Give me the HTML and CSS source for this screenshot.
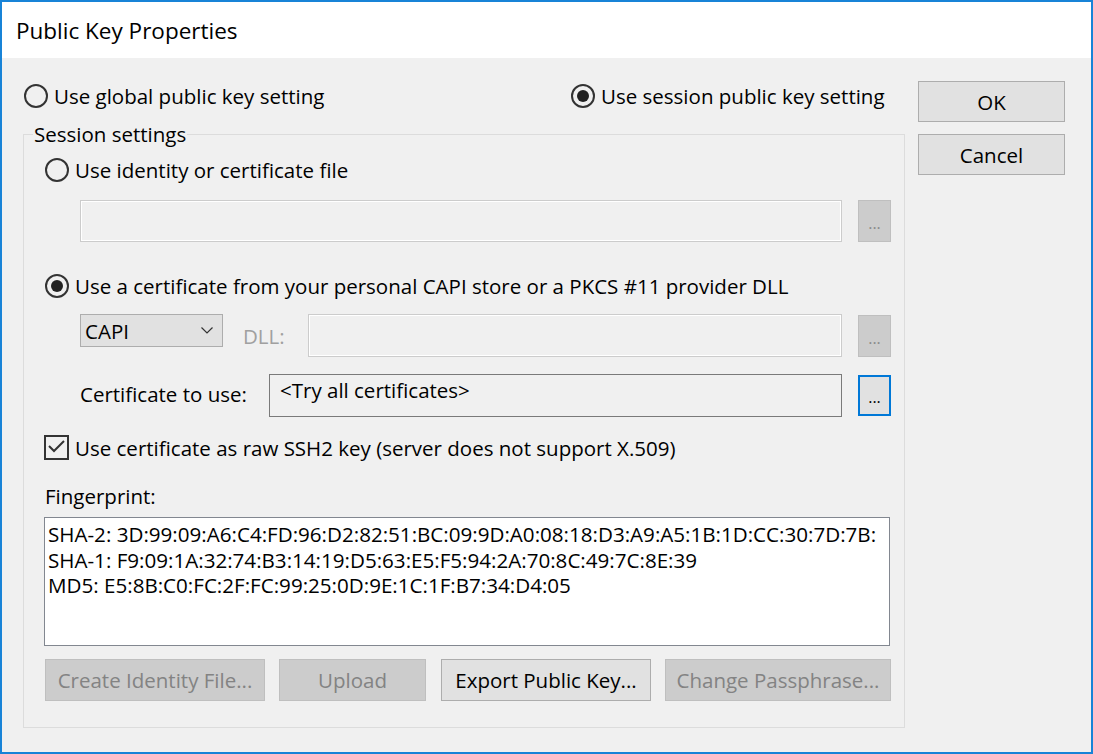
FILE: index.html
```html
<!DOCTYPE html>
<html lang="en">
<head>
<meta charset="utf-8">
<title>Public Key Properties</title>
<link rel="stylesheet" href="styles.css">
</head>
<body>
<div class="window">
  <div class="titlebar">Public Key Properties</div>
  <div class="client">
    <div class="main">
      <div class="scope-row">
        <div class="opt"><span class="radio"></span><span>Use global public key setting</span></div>
        <div class="opt"><span class="radio checked"></span><span>Use session public key setting</span></div>
      </div>
      <div class="group">
        <span class="group-title">Session settings</span>
        <div class="opt"><span class="radio"></span><span>Use identity or certificate file</span></div>
        <div class="row row-file indent">
          <div class="edit edit-disabled w-file"></div>
          <div class="dots dots-disabled">...</div>
        </div>
        <div class="opt row-capi"><span class="radio checked"></span><span>Use a certificate from your personal CAPI store or a PKCS #11 provider DLL</span></div>
        <div class="row row-combo indent">
          <div class="combo"><span>CAPI</span>
            <svg class="chev" width="12" height="7" viewBox="0 0 12 7"><path d="M0.5 0.5 L6 6 L11.5 0.5" fill="none" stroke="#333" stroke-width="1.2"/></svg>
          </div>
          <div class="dll-label">DLL:</div>
          <div class="edit edit-disabled w-dll"></div>
          <div class="dots dots-disabled dots-low">...</div>
        </div>
        <div class="row row-cert indent">
          <div class="cert-label">Certificate to use:</div>
          <div class="edit edit-readonly w-cert">&lt;Try all certificates&gt;</div>
          <div class="dots dots-focus">...</div>
        </div>
        <div class="check-row">
          <span class="checkbox"><svg width="21" height="21" viewBox="0 0 21 21"><path d="M3 9 L8 14 L18 4" fill="none" stroke="#333" stroke-width="2"/></svg></span>
          <span>Use certificate as raw SSH2 key (server does not support X.509)</span>
        </div>
        <div class="fp-label">Fingerprint:</div>
        <div class="fp-box">SHA-2: 3D:99:09:A6:C4:FD:96:D2:82:51:BC:09:9D:A0:08:18:D3:A9:A5:1B:1D:CC:30:7D:7B:
SHA-1: F9:09:1A:32:74:B3:14:19:D5:63:E5:F5:94:2A:70:8C:49:7C:8E:39
MD5: E5:8B:C0:FC:2F:FC:99:25:0D:9E:1C:1F:B7:34:D4:05</div>
        <div class="action-row">
          <button class="btn btn-disabled w-create">Create Identity File...</button>
          <button class="btn btn-disabled w-upload">Upload</button>
          <button class="btn w-export">Export Public Key...</button>
          <button class="btn btn-disabled w-pass">Change Passphrase...</button>
        </div>
      </div>
    </div>
    <div class="side">
      <button class="btn side-btn">OK</button>
      <button class="btn side-btn">Cancel</button>
    </div>
  </div>
</div>
</body>
</html>
```

FILE: styles.css
```css
html, body {
  margin: 0;
  padding: 0;
  background: #ffffff;
}

body {
  font-family: "Open Sans", "Noto Sans", sans-serif;
  font-size: 20.5px;
  color: #000;
}

.window {
  width: 1093px;
  height: 754px;
  box-sizing: border-box;
  border: 2px solid #1883d7;
  background: #f0f0f0;
  display: flex;
  flex-direction: column;
}

.titlebar {
  flex: none;
  height: 56px;
  background: #fff;
  display: flex;
  align-items: center;
  padding-left: 14px;
  font-size: 22.5px;
}

.client {
  flex: 1;
  display: flex;
  padding-left: 21px;
}

.main {
  width: 882px;
  flex: none;
}

.side {
  margin-left: 13px;
  padding-top: 23px;
  display: flex;
  flex-direction: column;
  gap: 12px;
}

.scope-row {
  margin-top: 26px;
  padding-left: 1px;
  display: grid;
  grid-template-columns: 547px auto;
}

.opt {
  height: 24px;
  display: flex;
  align-items: center;
  gap: 6px;
  white-space: nowrap;
}

.radio {
  flex: none;
  width: 24px;
  height: 24px;
  box-sizing: border-box;
  border: 2px solid #333;
  border-radius: 50%;
  display: flex;
  align-items: center;
  justify-content: center;
}

.radio.checked::after {
  content: "";
  width: 12px;
  height: 12px;
  border-radius: 50%;
  background: #222;
}

.group {
  position: relative;
  margin-top: 26px;
  border: 1px solid #dcdcdc;
  padding: 23px 12px 26px 21px;
}

.group-title {
  position: absolute;
  top: -13px;
  left: 9px;
  padding: 0 1px;
  line-height: 24px;
  background: #f0f0f0;
}

.indent {
  margin-left: 35px;
}

.row {
  display: flex;
  align-items: flex-start;
}

.row-file {
  margin-top: 18px;
  gap: 16px;
}

.row-capi {
  margin-top: 32px;
}

.row-combo {
  margin-top: 16px;
}

.row-cert {
  margin-top: 17px;
  align-items: center;
  gap: 0;
}

.edit {
  box-sizing: border-box;
  background: #f0f0f0;
}

.edit-disabled {
  border: 1px solid #cccccc;
  box-shadow: inset 0 0 0 1px #ffffff;
}

.edit-readonly {
  border: 1px solid #7a7a7a;
  padding: 3px 10px;
  line-height: 24px;
  align-self: flex-start;
}

.w-file {
  width: 762px;
  height: 42px;
}

.w-dll {
  width: 534px;
  height: 43px;
}

.w-cert {
  width: 573px;
  height: 43px;
}

.dots {
  flex: none;
  box-sizing: border-box;
  width: 33px;
  height: 42px;
  display: flex;
  align-items: center;
  justify-content: center;
  padding-top: 3px;
  font-size: 16px;
  letter-spacing: 0;
}

.dots-disabled {
  background: #cccccc;
  border: 1px solid #bfbfbf;
  color: #8a8a8a;
}

.dots-low {
  margin-left: 16px;
  margin-top: 1px;
}

.dots-focus {
  margin-left: 16px;
  height: 41px;
  margin-top: 1px;
  align-self: flex-start;
  background: #e1e1e1;
  border: 2px solid #0078d7;
  color: #000;
}

.combo {
  flex: none;
  box-sizing: border-box;
  width: 143px;
  height: 33px;
  background: #e1e1e1;
  border: 1px solid #adadad;
  display: flex;
  align-items: center;
  justify-content: space-between;
  padding: 0 9px 0 4px;
}

.chev {
  display: block;
}

.dll-label {
  flex: none;
  box-sizing: border-box;
  width: 85px;
  height: 43px;
  padding-left: 20px;
  display: flex;
  align-items: center;
  color: #a0a0a0;
}

.cert-label {
  flex: none;
  width: 189px;
  padding-bottom: 3px;
}

.check-row {
  margin-top: 18px;
  margin-left: -1px;
  height: 25px;
  display: flex;
  align-items: center;
  gap: 6px;
  white-space: nowrap;
}

.checkbox {
  flex: none;
  width: 25px;
  height: 25px;
  box-sizing: border-box;
  border: 2px solid #333;
  display: flex;
  align-items: center;
  justify-content: center;
}

.checkbox svg {
  display: block;
}

.fp-label {
  margin-top: 24px;
  height: 24px;
  line-height: 24px;
}

.fp-box {
  margin-top: 9px;
  margin-left: -1px;
  width: 846px;
  height: 129px;
  box-sizing: border-box;
  background: #fff;
  border: 1px solid #828790;
  padding: 4px 3px;
  font-size: 20.6px;
  line-height: 25.5px;
  white-space: pre;
  overflow: hidden;
}

.action-row {
  margin-top: 13px;
  display: flex;
}

.btn {
  box-sizing: border-box;
  height: 42px;
  padding: 0;
  margin: 0;
  font: inherit;
  color: #000;
  background: #e1e1e1;
  border: 1px solid #adadad;
  white-space: nowrap;
}

.btn-disabled {
  background: #cccccc;
  border-color: #bfbfbf;
  color: #838383;
}

.w-create {
  width: 220px;
}

.w-upload {
  width: 147px;
  margin-left: 14px;
}

.w-export {
  width: 210px;
  margin-left: 15px;
}

.w-pass {
  width: 226px;
  margin-left: 14px;
}

.side-btn {
  width: 147px;
  height: 41px;
}
```
